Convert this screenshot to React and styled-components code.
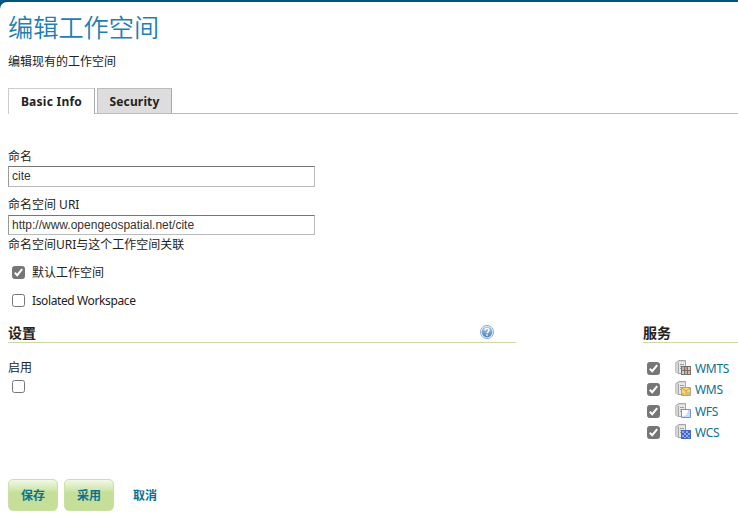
import React from 'react';
import styled, { createGlobalStyle } from 'styled-components';

const GlobalStyle = createGlobalStyle`
  * { box-sizing: border-box; }
  body {
    margin: 0;
    background: #00567c;
    color: #222;
    font: 12px/20px "Noto Sans", "Noto Sans CJK SC", sans-serif;
  }
`;

const Page = styled.div`
  height: 521px;
  padding-top: 2px;
  overflow: hidden;
`;

const Sheet = styled.main`
  height: 519px;
  padding-left: 8px;
  background: #fff;
  border-top-left-radius: 7px;
`;

const Title = styled.h1`
  margin: 0;
  padding-top: 7px;
  height: 50px;
  color: #1f7fb4;
  font-size: 25.2px;
  font-weight: 350;
  line-height: 36px;
`;

const Description = styled.p`
  margin: 0;
  height: 34px;
`;

const Tabs = styled.nav`
  display: flex;
  gap: 2px;
  height: 28px;
  padding-top: 2px;
  border-bottom: 1px solid #bbb;
`;

const Tab = styled.a`
  width: ${(p) => p.$width}px;
  height: ${(p) => (p.$active ? 26 : 25)}px;
  border: 1px solid ${(p) => (p.$active ? '#ccc' : '#bbb')};
  border-right-color: #aaa;
  border-bottom: 0;
  background: ${(p) => (p.$active ? '#fff' : '#ddd')};
  font-weight: 700;
  letter-spacing: ${(p) => (p.$active ? 0.25 : 0.15)}px;
  line-height: 25px;
  text-align: center;
`;

const Form = styled.form`
  padding-top: 33px;
`;

const Field = styled.div`
  height: ${(p) => p.$height}px;
`;

const Label = styled.label`
  display: block;
  height: ${(p) => p.$height || 20}px;
  white-space: nowrap;
`;

const TextInput = styled.input`
  display: block;
  width: 307px;
  height: ${(p) => p.$height}px;
  padding: 0 3px 1px;
  border: 1px solid #bbb;
  border-top-color: #767676;
  border-left-color: #999;
  background: #fff;
  color: #333;
  font: 12px "Liberation Sans", Arial, sans-serif;
`;

const CheckRow = styled.label`
  display: flex;
  align-items: center;
  height: 28px;
  padding-left: 4px;
  gap: 7px;
  letter-spacing: ${(p) => p.$spacing || 0}px;
`;

const CheckText = styled.span`
  padding-top: 2px;
`;

const CheckMark = styled.svg`
  display: block;
  flex: none;
  width: 13px;
  height: 13px;
`;

const Columns = styled.div`
  display: grid;
  grid-template-columns: 508px 95px;
  justify-content: space-between;
  height: 165px;
  padding-top: 8px;
`;

const Heading = styled.h2`
  display: flex;
  justify-content: space-between;
  margin: 0;
  height: 21px;
  padding-right: 21px;
  border-bottom: 1px solid #cdd6a8;
  font-size: 14px;
  font-weight: 700;
  line-height: 21px;
`;

const HelpIcon = styled.svg`
  width: 16px;
  height: 16px;
  margin-top: 2px;
`;

const Enable = styled.div`
  padding-top: 15px;
`;

const EnableCheck = styled.div`
  padding: 2px 0 0 4px;
`;

const Services = styled.ul`
  margin: 0;
  padding: 15px 0 0 4px;
  list-style: none;
`;

const Service = styled.li`
  display: flex;
  align-items: center;
  height: 21px;

  &:nth-child(2) {
    height: 22px;
    padding-bottom: 1px;
  }
`;

const ServiceIcon = styled.svg`
  flex: none;
  width: 16px;
  height: 16px;
  margin: 0 4px 1px 15px;
`;

const ServiceLink = styled.a`
  color: #0d7191;
  letter-spacing: -0.3px;
`;

const Actions = styled.div`
  display: flex;
  gap: 6px;
`;

const Button = styled.a`
  width: 50px;
  height: 32px;
  border: 1px solid ${(p) => (p.$plain ? 'transparent' : '#cbe0a4')};
  border-radius: 5px;
  background: ${(p) => (p.$plain ? 'none' : 'linear-gradient(#f2f8e6 0, #d4e8b4 30%, #c5df98 42%, #c5df98 100%)')};
  color: #0d7191;
  font-weight: 700;
  line-height: 31px;
  text-align: center;
`;

function Check({ on }) {
  return (
    <CheckMark viewBox="0 0 13 13">
      <rect x=".5" y=".5" width="12" height="12" rx="2" fill={on ? '#767676' : '#fff'} stroke="#767676" />
      {on && <path d="M2.8 6.8 5.2 9.2 10.2 3.2" fill="none" stroke="#fff" strokeWidth="2" />}
    </CheckMark>
  );
}

function Help() {
  return (
    <HelpIcon viewBox="0 0 16 16">
      <defs>
        <linearGradient id="help" x2="0" y2="1">
          <stop stopColor="#a9c7e9" />
          <stop offset="1" stopColor="#4c83be" />
        </linearGradient>
      </defs>
      <circle cx="8" cy="8" r="6.6" fill="#eef4fb" stroke="#90b3da" />
      <circle cx="8" cy="8" r="5.4" fill="url(#help)" />
      <path d="M6 6.4C6 4 10 4 10 6.3 10 7.8 8 7.8 8 9.2M8 10.3v1.5" fill="none" stroke="#fff" strokeWidth="1.5" />
    </HelpIcon>
  );
}

const badges = {
  WMTS: (
    <>
      <path d="M6 6h10v9H6z" fill="#77706d" />
      <path d="M7 7h2v3H7z" fill="#a8bcc5" />
      <path d="M10 7h2v3h-2z" fill="#e98b7a" />
      <path d="M13 7h2v3h-2zM7 11h2v3H7z" fill="#d9ccbe" />
      <path d="M10 11h2v3h-2z" fill="#9fc894" />
      <path d="M13 11h2v3h-2z" fill="#efb07d" />
    </>
  ),
  WMS: (
    <>
      <path d="M6.5 6.5h9v8h-9z" fill="#f5dc72" stroke="#b3a18a" />
      <path d="m7 7 4 3v4M11 10l4-3" fill="none" stroke="#e08e5c" />
      <path d="M12 11h3v3h-3z" fill="#c9c47a" />
      <path d="M7 12h2v2H7z" fill="#eeaa7a" />
    </>
  ),
  WFS: (
    <>
      <path d="M6.5 6.5h9v8h-9z" fill="#fafcff" stroke="#7894c8" />
      <path d="M7 14v-1c4 0 6-2 6-6h2v7z" fill="#c5dcf8" />
    </>
  ),
  WCS: (
    <>
      <path d="M6 6h10v9H6z" fill="#4668c4" />
      <path
        d="M7 7h2v2H7zM11 7h2v2h-2zM9 9h2v2H9zM13 9h2v2h-2zM7 11h2v2H7zM11 11h2v2h-2zM9 13h2v1H9zM13 13h2v1h-2z"
        fill="#8fabed"
      />
    </>
  ),
};

function Server({ kind }) {
  return (
    <ServiceIcon viewBox="0 0 16 16">
      <path d="M0 3 4 0h6l1 1v13H4l-4-2z" fill="#d6d6d6" />
      <path d="M.5 3.5v8.5L4 14" fill="none" stroke="#c2c2c2" />
      <path d="M4 2h6v12H4z" fill="#e9e9e9" />
      <path d="M.5 3 4 .5h6.5V7M3.5 3v10.5H7" fill="none" stroke="#a6a6a6" />
      <path d="M5 4.5h4M5 6.5h4M5 8.5h1" stroke="#9e9e9e" />
      {badges[kind]}
    </ServiceIcon>
  );
}

export default function App() {
  return (
    <>
      <GlobalStyle />
      <Page>
        <Sheet>
          <Title>编辑工作空间</Title>
          <Description>编辑现有的工作空间</Description>
          <Tabs>
            <Tab $active $width={87}>Basic Info</Tab>
            <Tab $width={75}>Security</Tab>
          </Tabs>
          <Form>
            <Field $height={48}>
              <Label $height={19}>命名</Label>
              <TextInput $height={21} defaultValue="cite" />
            </Field>
            <Field $height={40}>
              <Label>命名空间 URI</Label>
              <TextInput $height={20} defaultValue="http://www.opengeospatial.net/cite" />
            </Field>
            <Label $height={23}>命名空间URI与这个工作空间关联</Label>
            <CheckRow><Check on /><CheckText>默认工作空间</CheckText></CheckRow>
            <CheckRow $spacing={-0.38}><Check /><CheckText>Isolated Workspace</CheckText></CheckRow>
            <Columns>
              <section>
                <Heading>设置<Help /></Heading>
                <Enable>
                  <Label>启用</Label>
                  <EnableCheck><Check /></EnableCheck>
                </Enable>
              </section>
              <section>
                <Heading>服务</Heading>
                <Services>
                  {['WMTS', 'WMS', 'WFS', 'WCS'].map((name) => (
                    <Service key={name}>
                      <Check on />
                      <Server kind={name} />
                      <ServiceLink>{name}</ServiceLink>
                    </Service>
                  ))}
                </Services>
              </section>
            </Columns>
            <Actions>
              <Button>保存</Button>
              <Button>采用</Button>
              <Button $plain>取消</Button>
            </Actions>
          </Form>
        </Sheet>
      </Page>
    </>
  );
}
